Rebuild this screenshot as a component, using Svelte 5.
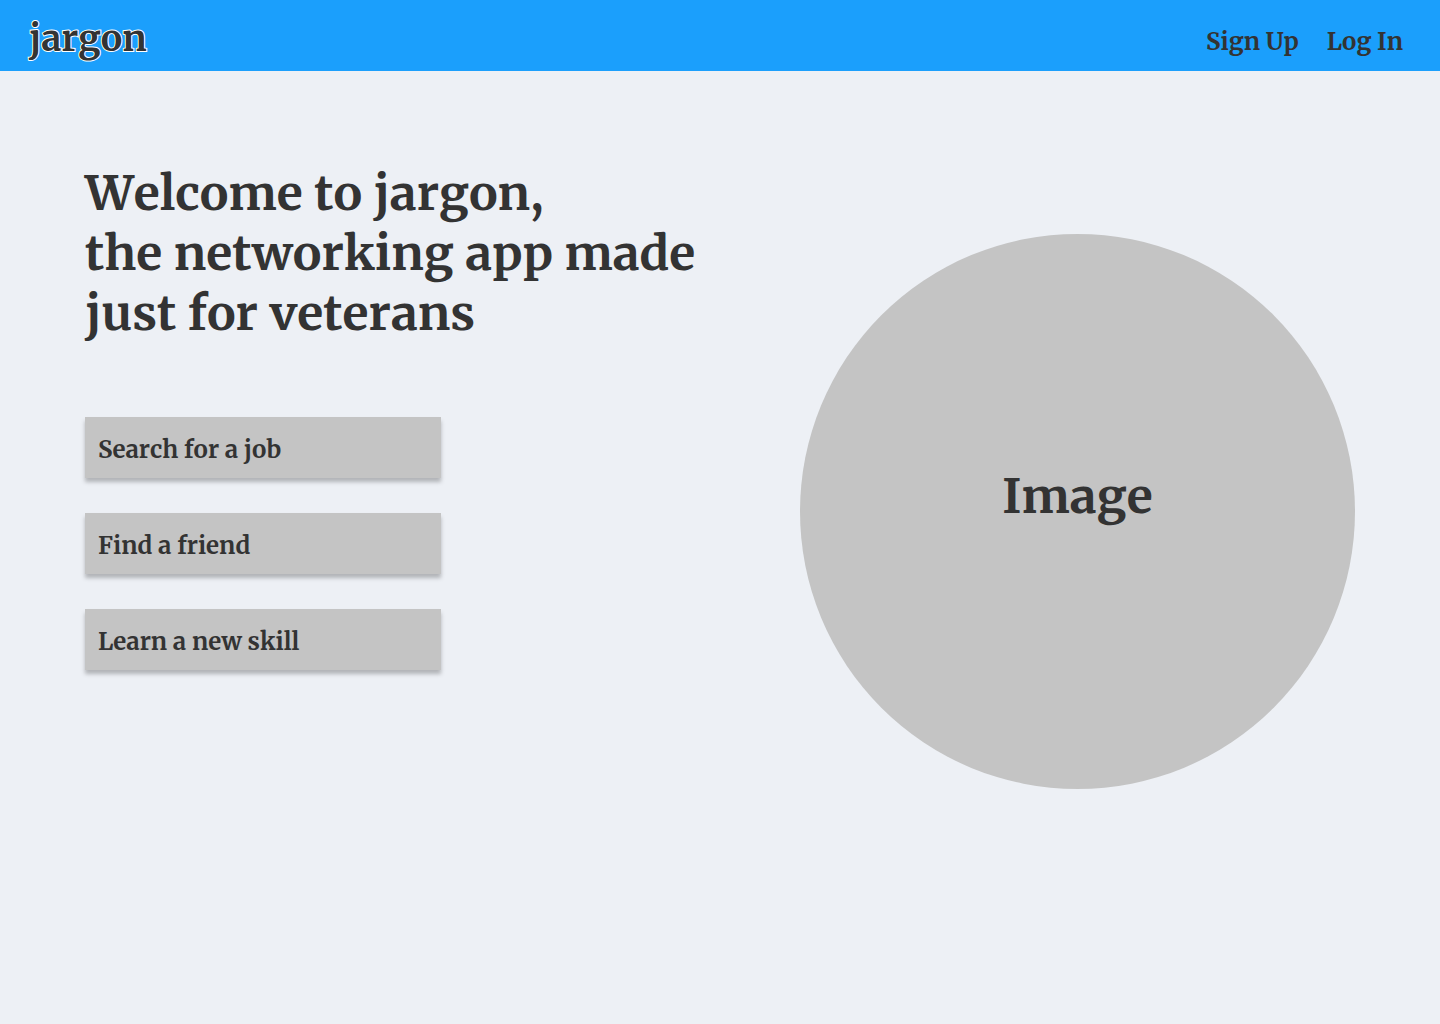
<script>
  const actions = ['Search for a job', 'Find a friend', 'Learn a new skill'];
</script>

<div class="page">
  <header>
    <a class="logo" href="#home">jargon</a>
    <nav>
      <a href="#signup">Sign Up</a>
      <a href="#login">Log In</a>
    </nav>
  </header>

  <main>
    <section class="intro">
      <h1>Welcome to jargon,<br />the networking app made<br />just for veterans</h1>
      <div class="actions">
        {#each actions as action}
          <button type="button">{action}</button>
        {/each}
      </div>
    </section>
    <div class="image">Image</div>
  </main>
</div>

<style>
  :global(body) {
    background: #edf0f5;
  }

  .page {
    font-family: Merriweather, "Liberation Serif", serif;
    font-weight: 700;
    font-kerning: none;
    color: #333;
  }

  header {
    display: flex;
    justify-content: space-between;
    align-items: center;
    box-sizing: border-box;
    min-height: 71px;
    padding: 0 37px 0 29px;
    background: #1b9ffc;
  }

  a {
    color: inherit;
    text-decoration: none;
  }

  .logo {
    padding-top: 6px;
    font-size: 36px;
    line-height: 48px;
    -webkit-text-stroke: 2px #fff;
    paint-order: stroke fill;
  }

  nav {
    display: flex;
    gap: 28px;
    padding-top: 12px;
    font-size: 24px;
    line-height: 30px;
  }

  main {
    display: flex;
    justify-content: space-between;
    align-items: flex-start;
    padding: 92px 85px 85px;
  }

  h1 {
    margin: 0;
    font-size: 48px;
    line-height: 60px;
    font-weight: 700;
    white-space: nowrap;
  }

  .actions {
    display: grid;
    gap: 35px;
    width: 356px;
    margin-top: 74px;
  }

  button {
    min-height: 61px;
    padding: 4px 13px 0;
    border: 0;
    background: #c4c4c4;
    box-shadow: 0 4px 4px rgba(0, 0, 0, 0.25);
    color: inherit;
    font: inherit;
    font-size: 24px;
    font-kerning: none;
    line-height: 30px;
    text-align: left;
    cursor: pointer;
  }

  .image {
    display: flex;
    align-items: center;
    justify-content: center;
    box-sizing: border-box;
    width: 555px;
    aspect-ratio: 1;
    margin-top: 71px;
    padding-bottom: 32px;
    border-radius: 50%;
    background: #c4c4c4;
    font-size: 48px;
    line-height: 60px;
  }
</style>
